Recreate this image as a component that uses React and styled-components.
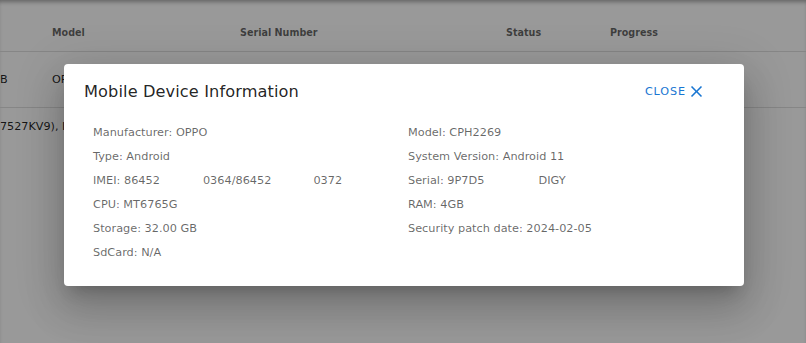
import styled, { createGlobalStyle } from 'styled-components';

const Global = createGlobalStyle`
  html, body { margin: 0; padding: 0; background: #fff; }
  body { font-family: "DejaVu Sans", Verdana, sans-serif; overflow: hidden; }
  * { box-sizing: border-box; }
`;

const Page = styled.div`
  width: 806px;
  height: 343px;
  position: relative;
  overflow: hidden;
  box-shadow: inset 0 4px 4px -2px rgba(0,0,0,0.35);
`;

const Table = styled.div`
  display: flex;
  flex-direction: column;
  padding-top: 14px;
`;

const Row = styled.div`
  display: grid;
  grid-template-columns: 52px 188px 266px 104px 1fr;
  align-items: center;
  height: ${p => p.$h}px;
  border-bottom: 1px solid #e0e0e0;
  font-size: ${p => p.$head ? '9.6px' : '11.2px'};
  font-weight: ${p => p.$head ? 700 : 400};
  color: ${p => p.$head ? 'rgba(0,0,0,0.6)' : 'rgba(0,0,0,0.87)'};
  white-space: nowrap;
`;

const Note = styled.div`
  font-size: 11.2px;
  color: rgba(0,0,0,0.87);
  padding-top: 12px;
  white-space: nowrap;
`;

const Backdrop = styled.div`
  position: absolute;
  inset: 0;
  background: rgba(0,0,0,0.4);
  display: flex;
  justify-content: center;
  align-items: flex-start;
  padding: 64px 0 0 2px;
`;

const Dialog = styled.div`
  width: 680px;
  height: 222px;
  background: #fff;
  border-radius: 4px;
  box-shadow: 0 11px 15px -7px rgba(0,0,0,0.2), 0 24px 38px 3px rgba(0,0,0,0.14), 0 9px 46px 8px rgba(0,0,0,0.12);
  display: flex;
  flex-direction: column;
`;

const Header = styled.div`
  display: flex;
  justify-content: space-between;
  align-items: center;
  padding: 14px 32px 0 20px;
  height: 40px;
`;

const Title = styled.h2`
  margin: 0;
  font-size: 16.2px;
  font-weight: 400;
  color: rgba(0,0,0,0.87);
  letter-spacing: 0.1px;
`;

const CloseButton = styled.button`
  border: 0;
  background: none;
  padding: 4px 6px 4px 8px;
  display: flex;
  align-items: center;
  gap: 1px;
  font-family: inherit;
  font-size: 11.2px;
  letter-spacing: 0.9px;
  text-transform: uppercase;
  color: #1976d2;
  cursor: pointer;
`;

const Content = styled.div`
  display: grid;
  grid-template-columns: 315px 315px;
  padding: 17px 0 0 29px;
`;

const Col = styled.div`
  display: flex;
  flex-direction: column;
`;

const Item = styled.div`
  height: 24px;
  line-height: 24px;
  font-size: 11.3px;
  color: rgba(0,0,0,0.6);
  white-space: nowrap;
`;

const Hidden = styled.span`
  display: inline-block;
  width: ${p => p.$w}px;
`;

const left = [
  'Manufacturer: OPPO',
  'Type: Android',
  <>IMEI: 86452<Hidden $w={43} />0364/86452<Hidden $w={42} />0372</>,
  'CPU: MT6765G',
  'Storage: 32.00 GB',
  'SdCard: N/A',
];

const right = [
  'Model: CPH2269',
  'System Version: Android 11',
  <>Serial: 9P7D5<Hidden $w={54} />DIGY</>,
  'RAM: 4GB',
  'Security patch date: 2024-02-05',
];

const App = () => (
  <>
    <Global />
    <Page>
      <Table>
        <Row $head $h={38}>
          <span />
          <span>Model</span>
          <span>Serial Number</span>
          <span>Status</span>
          <span>Progress</span>
        </Row>
        <Row $h={56}>
          <span>B</span>
          <span>OPPO</span>
          <span />
          <span />
          <span />
        </Row>
        <Note>7527KV9), Inc</Note>
      </Table>
      <Backdrop>
        <Dialog>
          <Header>
            <Title>Mobile Device Information</Title>
            <CloseButton>
              Close
              <svg width="19" height="19" viewBox="0 0 24 24" fill="currentColor">
                <path d="M19 6.41 17.59 5 12 10.59 6.41 5 5 6.41 10.59 12 5 17.59 6.41 19 12 13.41 17.59 19 19 17.59 13.41 12z" />
              </svg>
            </CloseButton>
          </Header>
          <Content>
            <Col>{left.map((t, i) => <Item key={i}>{t}</Item>)}</Col>
            <Col>{right.map((t, i) => <Item key={i}>{t}</Item>)}</Col>
          </Content>
        </Dialog>
      </Backdrop>
    </Page>
  </>
);

export default App;
